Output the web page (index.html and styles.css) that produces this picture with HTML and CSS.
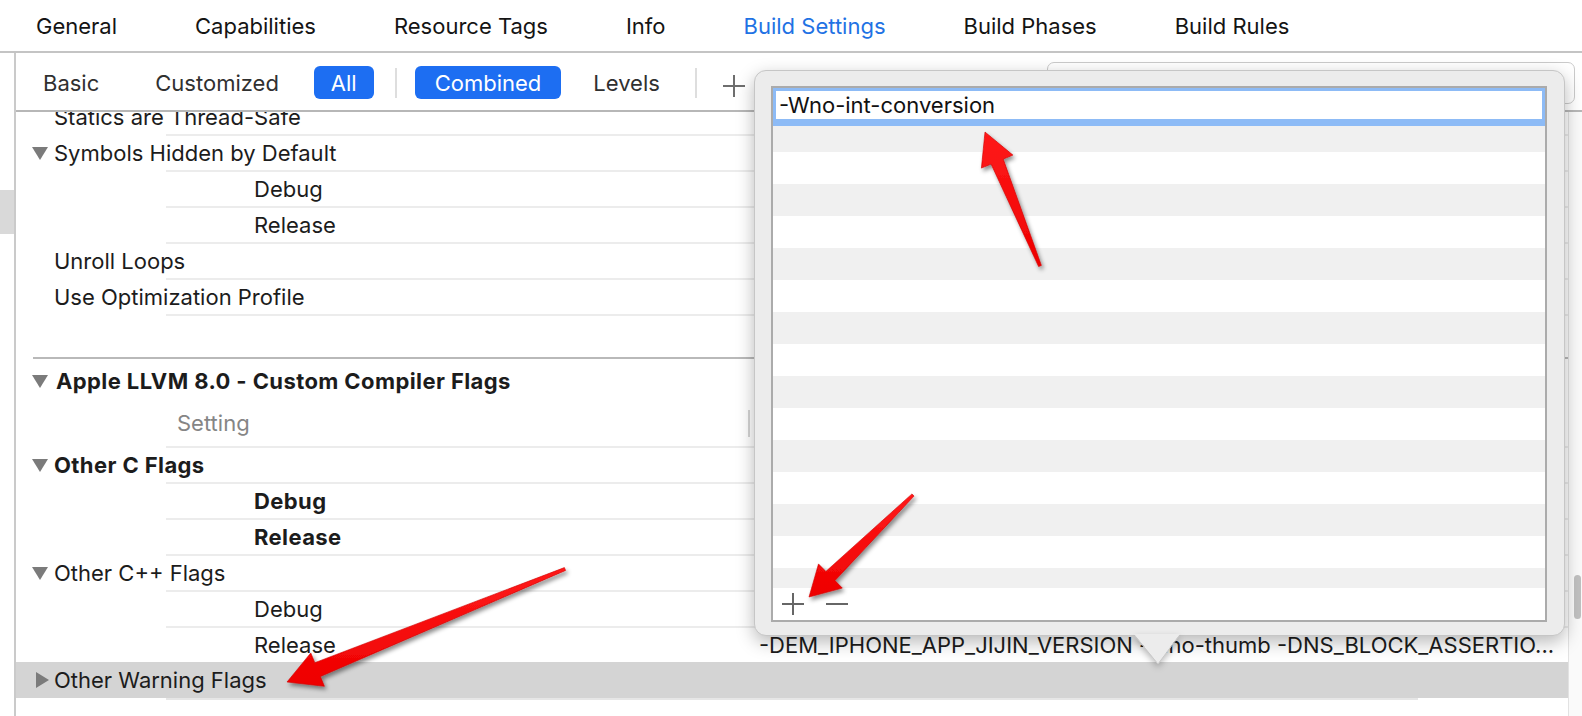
FILE: index.html
```html
<!DOCTYPE html>
<html>
<head>
<meta charset="utf-8">
<link rel="stylesheet" href="styles.css">
</head>
<body>
<div class="window">
  <nav class="tabs">
    <span class="tab">General</span>
    <span class="tab">Capabilities</span>
    <span class="tab">Resource Tags</span>
    <span class="tab">Info</span>
    <span class="tab active">Build Settings</span>
    <span class="tab">Build Phases</span>
    <span class="tab">Build Rules</span>
  </nav>
  <div class="main">
    <aside class="sidebar"><div class="sel"></div></aside>
    <section class="editor">
      <div class="filterbar">
        <span class="seg">Basic</span>
        <span class="seg m-cust">Customized</span>
        <span class="seg on m-all">All</span>
        <span class="fsep m-sep1"></span>
        <span class="seg on m-comb">Combined</span>
        <span class="seg m-lev">Levels</span>
        <span class="fsep m-sep2"></span>
        <svg class="addbtn" width="24" height="24" viewBox="0 0 24 24"><path d="M12 1V23M1 12H23" stroke="#6e6e6e" stroke-width="2" fill="none"/></svg>
        <div class="search"></div>
      </div>
      <div class="body">
        <div class="list">
          <div class="row first"><span class="lbl">Statics are Thread-Safe</span></div>
          <div class="row"><svg class="disc" viewBox="0 0 16 14"><polygon points="0,1 16,1 8,14" fill="#7b7b7b"/></svg><span>Symbols Hidden by Default</span></div>
          <div class="row"><span class="sub">Debug</span></div>
          <div class="row"><span class="sub">Release</span></div>
          <div class="row"><span class="lbl">Unroll Loops</span></div>
          <div class="row"><span class="lbl">Use Optimization Profile</span></div>
          <div class="spacer"></div>
          <div class="secline"></div>
          <div class="row head"><svg class="disc" viewBox="0 0 16 14"><polygon points="0,1 16,1 8,14" fill="#7b7b7b"/></svg><span class="headtxt">Apple LLVM 8.0 - Custom Compiler Flags</span></div>
          <div class="row setting"><span class="setlbl">Setting</span><span class="coldiv"></span></div>
          <div class="row bold"><svg class="disc" viewBox="0 0 16 14"><polygon points="0,1 16,1 8,14" fill="#7b7b7b"/></svg><span>Other C Flags</span></div>
          <div class="row bold"><span class="sub">Debug</span></div>
          <div class="row bold"><span class="sub">Release</span></div>
          <div class="row"><svg class="disc" viewBox="0 0 16 14"><polygon points="0,1 16,1 8,14" fill="#7b7b7b"/></svg><span>Other C++ Flags</span></div>
          <div class="row"><span class="sub">Debug</span></div>
          <div class="row last"><span class="sub subw">Release</span><span class="val">-DEM_IPHONE_APP_JIJIN_VERSION -mno-thumb -DNS_BLOCK_ASSERTIO...</span></div>
          <div class="row hl"><svg class="disc right" viewBox="0 0 14 16"><polygon points="1,0 14,8 1,16" fill="#7b7b7b"/></svg><span>Other Warning Flags</span></div>
        </div>
        <div class="scroll"><div class="thumb"></div></div>
      </div>
    </section>
  </div>

  <div class="popover">
    <div class="table">
      <div class="field">-Wno-int-conversion</div>
      <div class="stripes"></div>
      <div class="tbar">
        <svg width="24" height="24" viewBox="0 0 24 24"><path d="M12 1V23M1 12H23" stroke="#666" stroke-width="2" fill="none"/></svg>
        <svg class="minus" width="24" height="24" viewBox="0 0 24 24"><path d="M1 12H23" stroke="#666" stroke-width="2" fill="none"/></svg>
      </div>
    </div>
    <svg class="pop-arrow" width="46" height="32" viewBox="0 0 46 32">
      <polygon points="0,0 46,0 24,30" fill="#ececec"/>
      <polyline points="1,2 24,30 45,2" fill="none" stroke="#c9c9c9" stroke-width="1"/>
    </svg>
  </div>

  <svg class="arrows" width="1582" height="716" viewBox="0 0 1582 716">
    <defs>
      <filter id="sh" x="-20%" y="-20%" width="140%" height="140%">
        <feDropShadow dx="2" dy="3" stdDeviation="2" flood-color="#000" flood-opacity="0.45"/>
      </filter>
      <linearGradient id="rg" x1="0" y1="0" x2="0" y2="1">
        <stop offset="0" stop-color="#ff1a1a"/>
        <stop offset="1" stop-color="#ee0000"/>
      </linearGradient>
    </defs>
    <g filter="url(#sh)" fill="url(#rg)" stroke="#d00000" stroke-width="0.6" stroke-linejoin="round">
      <polygon points="985,132 1012.9,155.1 1003.2,159.1 1041.4,265.4 1038.6,266.6 991.1,164.1 981.4,168.1"/>
      <polygon points="809,597 818.5,563.9 825.9,571.4 912,493.9 914,496.1 835,580.6 842.3,588.1"/>
      <polygon points="287,682 310.8,652.9 314.8,662.7 564.4,567.6 565.6,570.4 320.4,676.5 324.4,686.3"/>
    </g>
  </svg>
</div>
</body>
</html>
```
FILE: styles.css
```css
* { box-sizing: border-box; margin: 0; padding: 0; }
html, body { width: 1582px; height: 716px; overflow: hidden; background: #fff; }
body {
  font-family: Inter, "Liberation Sans", sans-serif;
  font-size: 22px;
  color: #1c1c1c;
}
.window { position: relative; width: 1582px; height: 716px; overflow: hidden; }

/* top tabs */
.tabs {
  height: 53px;
  border-bottom: 2px solid #c4c4c4;
  display: flex;
  align-items: center;
  gap: 78px;
  padding-left: 36px;
}
.tab { line-height: 26px; white-space: nowrap; color: #141414; }
.tab.active { color: #1f72e4; }

.main { display: flex; height: 663px; }

/* left sidebar stub */
.sidebar { width: 16px; flex: none; border-right: 2px solid #cacaca; }
.sidebar .sel { margin-top: 137px; height: 44px; background: #d9d9d9; }

/* editor */
.editor { flex: 1; display: flex; flex-direction: column; min-width: 0; }
.filterbar {
  height: 59px;
  flex: none;
  border-bottom: 2px solid #b7b7b7;
  display: flex;
  align-items: flex-start;
  padding-left: 13px;
}
.seg {
  margin-top: 13px;
  height: 33px;
  padding: 0 14px;
  border-radius: 6px;
  display: flex;
  align-items: center;
  color: #303030;
  white-space: nowrap;
}
.seg.on { background: #1d6ef2; color: #fff; }
.m-cust { margin-left: 28px; }
.m-all { margin-left: 21px; padding: 0 17px; }
.m-comb { margin-left: 18px; padding: 0 20px; }
.m-lev { margin-left: 18px; }
.fsep { width: 2px; height: 30px; margin-top: 15px; background: #dedede; }
.m-sep1 { margin-left: 21px; }
.m-sep2 { margin-left: 21px; }
.addbtn { margin-top: 21px; margin-left: 25px; flex: none; }
.search {
  margin-left: auto;
  margin-right: 7px;
  margin-top: 9px;
  width: 528px;
  height: 42px;
  border: 1px solid #cbcbcb;
  border-radius: 7px;
  background: #fff;
}

.body { flex: 1; display: flex; min-height: 0; }
.list { flex: 1; overflow: hidden; min-width: 0; }
.scroll { width: 14px; flex: none; border-left: 1px solid #e2e2e2; background: #fafafa; }
.thumb { margin-top: 463px; margin-left: 5px; width: 7px; height: 44px; border-radius: 4px; background: #c0c0c0; }

/* rows */
.row {
  height: 36px;
  padding-bottom: 2px;
  display: flex;
  align-items: center;
  position: relative;
  white-space: nowrap;
}
.row::after {
  content: "";
  position: absolute;
  left: 150px;
  right: 0;
  bottom: 0;
  height: 2px;
  background: #ececec;
}
.row.first { margin-top: -12px; }
.lbl { padding-left: 38px; }
.sub { padding-left: 238px; }
.subw { width: 743px; flex: none; }
.disc { width: 16px; height: 14px; margin-left: 16px; margin-right: 6px; flex: none; }
.disc.right { width: 14px; height: 16px; margin-left: 19px; margin-right: 5px; }
.spacer { height: 41px; }
.secline { height: 2px; margin-left: 17px; background: #b9b9b9; }
.row.head { height: 41px; padding-bottom: 0; padding-top: 2px; }
.row.head::after { display: none; }
.headtxt { margin-left: 2px; }
.row.setting { height: 48px; }
.setlbl { width: 732px; padding-left: 161px; color: #858585; flex: none; }
.coldiv { width: 2px; height: 27px; background: #d4d4d4; }
.row.bold, .row.head { font-weight: 700; letter-spacing: 0.4px; }
.row.last { height: 34px; padding-bottom: 0; }
.row.last::after { display: none; }
.val { color: #1c1c1c; }
.row.hl { background: #d4d4d4; padding-bottom: 0; }
.row.hl::after { bottom: -2px; right: 150px; background: #e6e6e6; }

/* popover */
.popover {
  position: absolute;
  left: 754px;
  top: 70px;
  width: 811px;
  height: 566px;
  background: #ececec;
  border: 1px solid #c6c6c6;
  border-radius: 12px;
  padding: 15px 17px 13px 16px;
  box-shadow: 0 6px 18px rgba(0,0,0,0.28);
}
.table {
  height: 100%;
  border: 2px solid #ababab;
  background: #fff;
  display: flex;
  flex-direction: column;
}
.field {
  height: 38px;
  flex: none;
  border: 3px solid #8dbbf6;
  border-bottom-width: 7px;
  padding-left: 3px;
  display: flex;
  align-items: center;
  color: #111;
}
.stripes {
  flex: 1;
  background: repeating-linear-gradient(#f0f0f0 0 32px, #fff 32px 64px);
  background-position: 0 -6px;
}
.tbar {
  height: 32px;
  flex: none;
  display: flex;
  align-items: center;
  padding-left: 8px;
  gap: 20px;
}
.pop-arrow {
  position: absolute;
  left: 379px;
  top: 563px;
  filter: drop-shadow(0 3px 3px rgba(0,0,0,0.25));
}

/* annotation arrows */
.arrows { position: absolute; left: 0; top: 0; pointer-events: none; }
```
